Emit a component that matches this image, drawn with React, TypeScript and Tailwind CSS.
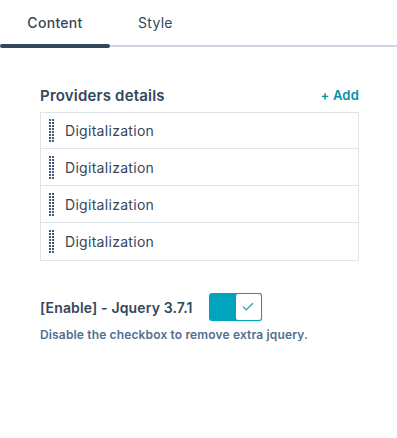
import { Check } from "lucide-react";

const providers = ["Digitalization", "Digitalization", "Digitalization", "Digitalization"];

function DragHandle() {
  return (
    <div className="grid grid-cols-2 gap-x-[1px] gap-y-[1px]">
      {Array.from({ length: 16 }).map((_, i) => (
        <span key={i} className="h-[2px] w-[2px] bg-[#425b76]" />
      ))}
    </div>
  );
}

export default function App() {
  return (
    <div
      className="min-h-[438px] w-[397px] bg-white text-[#33475b]"
      style={{ fontFamily: "Inter, 'Noto Sans', sans-serif" }}
    >
      {/* Tabs */}
      <div className="flex">
        <div className="flex w-[110px] flex-col">
          <div className="flex h-[44px] items-center justify-center text-[14px] font-medium tracking-[0.3px]">
            Content
          </div>
          <div className="h-[4px] rounded-full bg-[#33475b]" />
        </div>
        <div className="flex flex-1 flex-col">
          <div className="flex h-[44px] items-center pl-7 text-[14px] tracking-[0.3px] text-[#33475b]">Style</div>
          <div className="flex h-[4px] items-center">
            <div className="h-[1.5px] w-full bg-[#cbd6e2]" />
          </div>
        </div>
      </div>

      {/* Providers */}
      <div className="pl-10 pt-[38px]">
        <div className="flex w-[319px] items-center justify-between pb-[6px]">
          <h2 className="text-[15px] font-semibold leading-5 tracking-[0.2px]">Providers details</h2>
          <button className="text-[13px] font-semibold tracking-[0.2px] text-[#0091ae]">+ Add</button>
        </div>
        <div className="w-[319px] divide-y divide-[#dfe3eb] border border-[#dfe3eb]">
          {providers.map((name, i) => (
            <div
              key={i}
              className={`flex items-center gap-[11px] pl-2 ${i === 0 ? "h-[36px]" : "h-[37px]"}`}
            >
              <DragHandle />
              <span className="text-[14px] tracking-[0.3px] text-[#33475b]">{name}</span>
            </div>
          ))}
        </div>

        {/* Jquery toggle */}
        <div className="mt-[32px] flex items-center gap-4">
          <span className="text-[14px] font-semibold tracking-[0.15px]">[Enable] - Jquery 3.7.1</span>
          <div className="flex h-[28px] w-[53px] rounded-[3px] bg-[#00a4bd]">
            <div className="flex-1" />
            <div className="flex w-[27px] items-center justify-center rounded-[3px] border border-[#00a4bd] bg-white shadow-sm">
              <Check className="h-[14px] w-[14px] text-[#00a4bd]" strokeWidth={2} />
            </div>
          </div>
        </div>
        <p className="mt-[5px] text-[12px] font-semibold tracking-[0.15px] text-[#516f90]">
          Disable the checkbox to remove extra jquery.
        </p>
      </div>
    </div>
  );
}
